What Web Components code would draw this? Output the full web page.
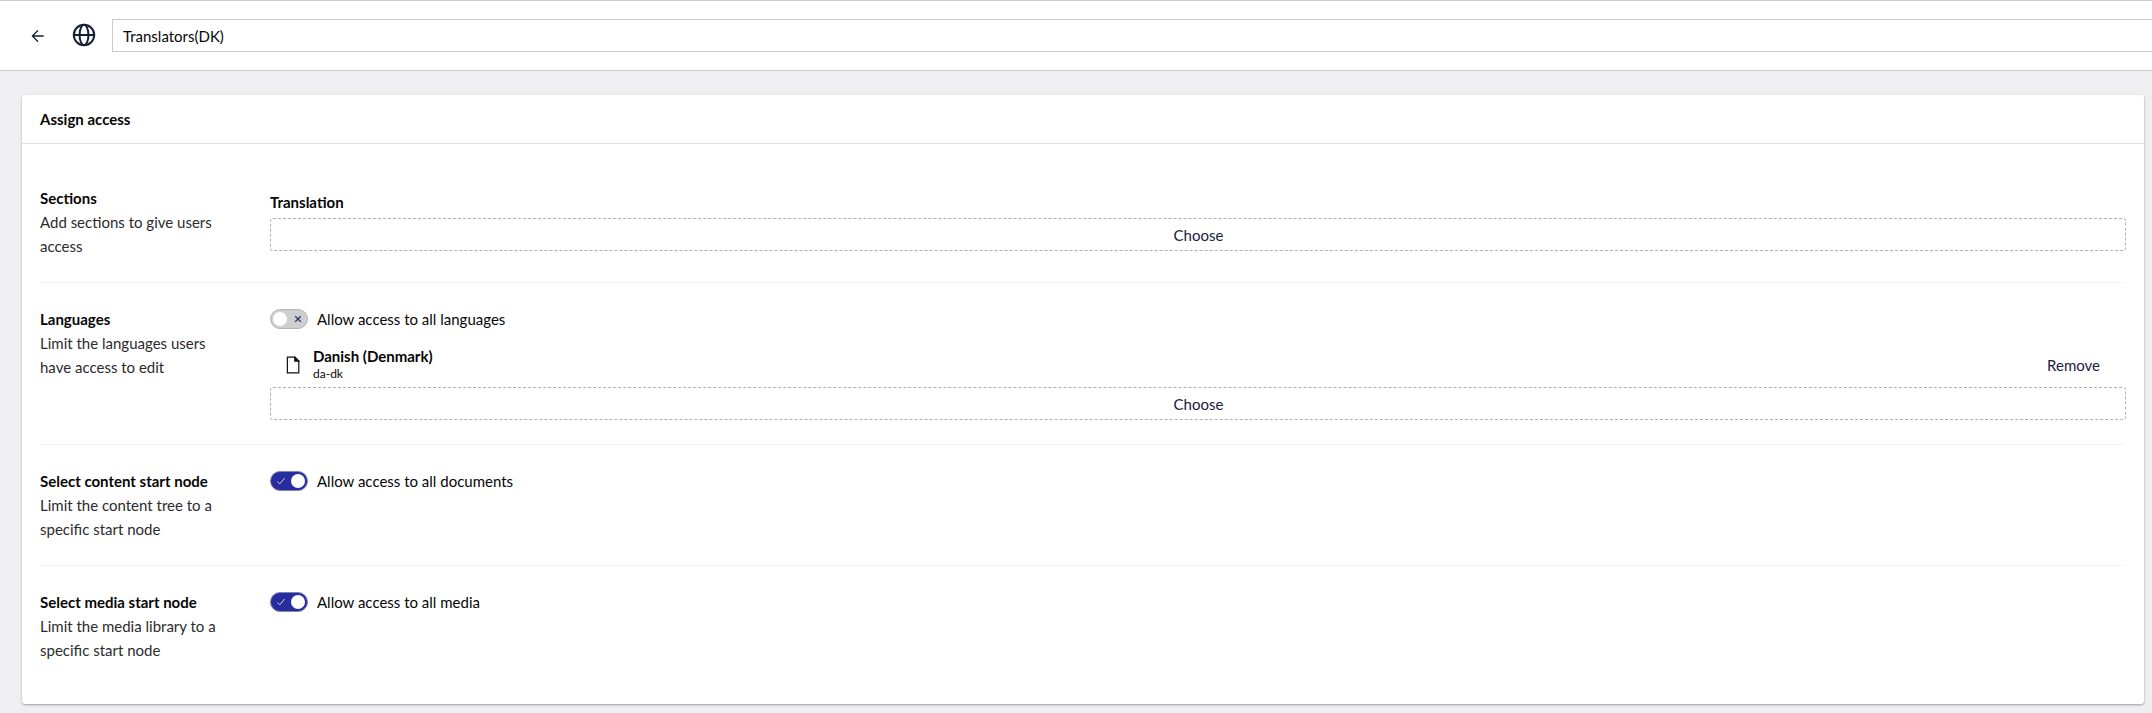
<!DOCTYPE html>
<html lang="en">
<head>
<meta charset="utf-8">
<title>User group</title>
<style>
html,body{margin:0;height:100%;overflow:hidden}
body{font:15px/24px Lato,"Liberation Sans",sans-serif;color:#060606;background:#efeff1}
</style>
</head>
<body>
<group-editor></group-editor>
<script>
const define = (name, html) => customElements.define(name, class extends HTMLElement {
  constructor() {
    super();
    const t = document.createElement('template');
    t.innerHTML = html;
    this.attachShadow({mode: 'open'}).append(t.content.cloneNode(true));
  }
});

define('editor-header', `<style>
:host{display:flex;align-items:flex-start;box-sizing:border-box;height:71px;background:#fff;border-top:1px solid #cbcacc;border-bottom:1px solid #cbcacc;overflow:hidden}
svg{flex:none;fill:none;stroke:#162035;stroke-linecap:round;stroke-linejoin:round}
.back{width:18px;height:18px;margin:26px 0 0 29px;stroke-width:1.75}
.globe{width:26px;height:26px;margin:21px 0 0 24px;stroke-width:1.85}
.name{box-sizing:border-box;flex:none;width:2100px;height:33px;margin:18px 0 0 15px;padding:4px 10px 5px;border:1px solid #cbcacc;line-height:24px}
</style>
<svg class="back" viewBox="0 0 24 24"><path d="M11.5 19l-7-7 7-7M19 12H4.5"/></svg>
<svg class="globe" viewBox="0 0 24 24"><circle cx="12" cy="12" r="9.4"/><path d="M2.6 12h18.8"/><ellipse cx="12" cy="12" rx="4.1" ry="9.4"/></svg>
<div class="name"><slot></slot></div>`);

define('access-box', `<style>
:host{display:block;box-sizing:border-box;height:609px;margin:24px 8px 0 22px;background:#fff;border-radius:3px;box-shadow:0 1px 3px rgba(0,0,0,.12),0 1px 2px rgba(0,0,0,.24)}
header{box-sizing:border-box;height:49px;padding:12px 18px;border-bottom:1px solid #e0e0e2;font-weight:bold}
main{padding:18px}
</style>
<header><slot name="headline"></slot></header><main><slot></slot></main>`);

define('property-row', `<style>
:host{display:grid;grid-template-columns:200px 1fr;column-gap:30px;padding:24px 0;border-bottom:1px solid #f3f3f5}
:host([last]){border-bottom:0}
.label{font-weight:bold}
.description{color:#2b2b2b}
</style>
<div><div class="label"><slot name="label"></slot></div><div class="description"><slot name="description"></slot></div></div>
<div><slot></slot></div>`);

define('choose-button', `<style>
:host{display:block;box-sizing:border-box;height:33px;padding-left:1px;border:1px dashed #b0b0b3;border-radius:3px;text-align:center;line-height:33px;color:#1a2040}
</style><slot></slot>`);

define('section-item', `<style>
:host{display:block;padding:4px 0;font-weight:bold}
</style><slot></slot>`);

define('access-toggle', `<style>
:host{display:flex;align-items:center;gap:9px;height:24px}
.track{display:flex;align-items:center;justify-content:space-between;box-sizing:border-box;width:38px;height:20px;padding:0 5px 0 2px;border:1px solid #b5b5b6;border-radius:10px;background:#cfcfd0}
.knob{width:14px;height:14px;border-radius:50%;background:#fff}
svg{width:8px;height:8px;fill:none;stroke:#30366e;stroke-width:1.3}
.yes{display:none}
:host([checked]) .track{flex-direction:row-reverse;padding:0 2px 0 6px;background:#272c9f;border-color:#8284aa}
:host([checked]) .no{display:none}
:host([checked]) .yes{display:block;stroke:#d2d5f0;stroke-width:1}
</style>
<span class="track"><span class="knob"></span>
<svg class="no" viewBox="0 0 8 8"><path d="M1.2 1.2l5.6 5.6M6.8 1.2L1.2 6.8"/></svg>
<svg class="yes" viewBox="0 0 8 8"><path d="M.4 4.5l2.3 2.3L7.7 1"/></svg></span>
<span><slot></slot></span>`);

define('language-item', `<style>
:host{display:flex;align-items:center;height:45px;margin-top:11px;padding:0 26px 0 16px}
svg{width:14px;height:18px;margin-right:13px;fill:none;stroke:#111;stroke-width:1.2}
.text{flex:1;padding-bottom:2px}
.name{font-weight:bold;line-height:20px}
.code{font-size:12px;line-height:16px}
.action{color:#1a2040}
</style>
<svg viewBox="0 0 14 18"><path d="M1.4 1.1h7.4l4 4v11.8H1.4z"/><path d="M8.8 1.1v4h4z" fill="#111"/></svg>
<div class="text"><div class="name"><slot></slot></div><div class="code"><slot name="code"></slot></div></div>
<div class="action"><slot name="action"></slot></div>`);

define('group-editor', `<style>:host{display:block}</style>
<editor-header>Translators(DK)</editor-header>
<access-box>
<span slot="headline">Assign access</span>
<property-row><span slot="label">Sections</span><span slot="description">Add sections to give users<br>access</span>
<section-item>Translation</section-item><choose-button>Choose</choose-button></property-row>
<property-row><span slot="label">Languages</span><span slot="description">Limit the languages users<br>have access to edit</span>
<access-toggle>Allow access to all languages</access-toggle>
<language-item>Danish (Denmark)<span slot="code">da-dk</span><span slot="action">Remove</span></language-item>
<choose-button>Choose</choose-button></property-row>
<property-row><span slot="label">Select content start node</span><span slot="description">Limit the content tree to a<br>specific start node</span>
<access-toggle checked>Allow access to all documents</access-toggle></property-row>
<property-row last><span slot="label">Select media start node</span><span slot="description">Limit the media library to a<br>specific start node</span>
<access-toggle checked>Allow access to all media</access-toggle></property-row>
</access-box>`);
</script>
</body>
</html>
